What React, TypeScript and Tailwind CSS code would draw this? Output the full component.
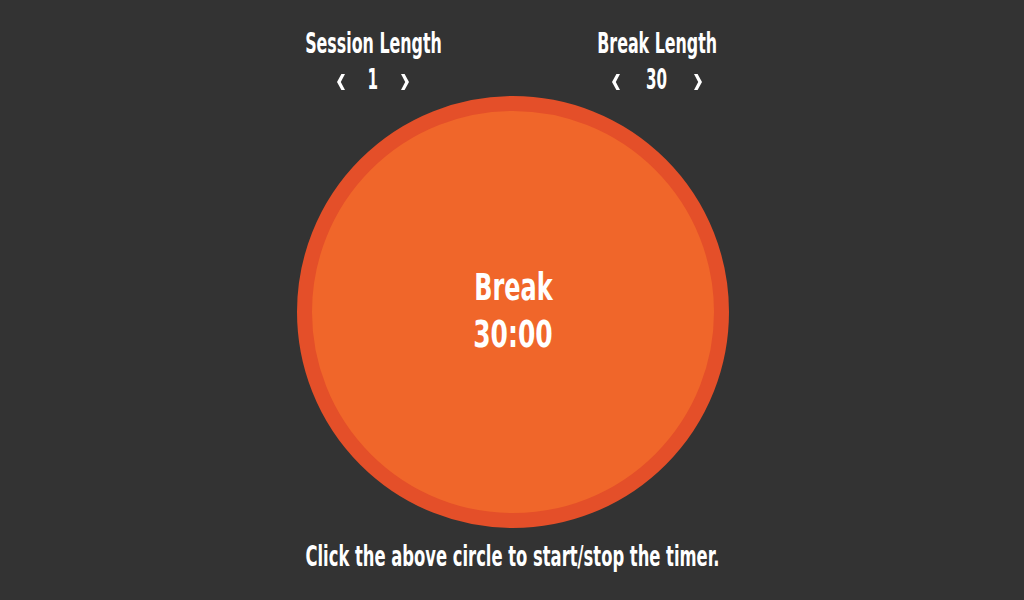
const font = "font-['DejaVu_Sans_Condensed','DejaVu_Sans',sans-serif]";

const Chevron = ({ dir }: { dir: "left" | "right" }) => (
  <svg width="8" height="16" viewBox="0 0 8 16" className="block">
    {dir === "left" ? (
      <polygon points="8,0 4.4,0 0,8 4.4,16 8,16 3.8,8" fill="#fff" />
    ) : (
      <polygon points="0,0 3.6,0 8,8 3.6,16 0,16 4.2,8" fill="#fff" />
    )}
  </svg>
);

const Setter = ({ label, value }: { label: string; value: number }) => (
  <div className="flex w-[180px] flex-col items-center">
    <div className="inline-block whitespace-nowrap scale-x-[0.63] text-[28px] leading-[32px] font-bold text-white">
      {label}
    </div>
    <div className="mt-[6px] flex h-[28px] items-center gap-[19px] text-white">
      <button className="mt-[4px]"><Chevron dir="left" /></button>
      <span className="inline-block scale-x-[0.6] text-[28px] leading-[28px] font-bold">{value}</span>
      <button className="mt-[4px]"><Chevron dir="right" /></button>
    </div>
  </div>
);

export default function App() {
  return (
    <div className={`min-h-[600px] w-full bg-[#333333] ${font} flex flex-col items-center pt-[28px]`}>
      <div className="flex gap-[104px] pl-[6px]">
        <Setter label="Session Length" value={1} />
        <Setter label="Break Length" value={30} />
      </div>

      <button className="ml-[2px] mt-[2px] h-[432px] w-[432px] rounded-full border-[15px] border-[#e44f29] bg-[#f0662a] flex flex-col items-center justify-center text-white font-bold">
        <span className="inline-block scale-x-[0.72] text-[37px] leading-[47px]">Break</span>
        <span className="mb-[2px] inline-block scale-x-[0.75] text-[37px] leading-[47px]">30:00</span>
      </button>

      <p className="mt-[13px] inline-block whitespace-nowrap scale-x-[0.65] text-[28px] leading-[32px] font-bold text-white">
        Click the above circle to start/stop the timer.
      </p>
    </div>
  );
}
